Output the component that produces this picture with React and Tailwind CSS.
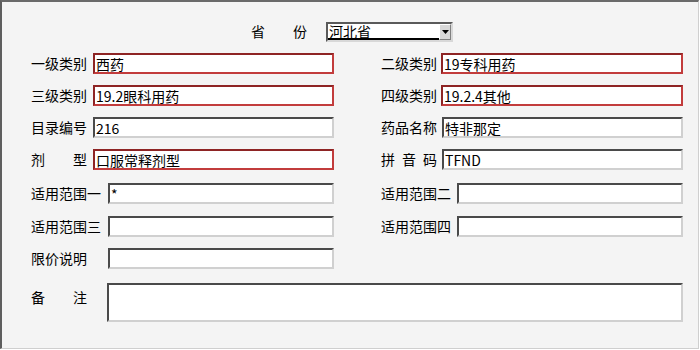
const font = { fontFamily: '"Noto Sans CJK SC", "Noto Sans", sans-serif' };

const grayBox =
  "border-2 border-t-[#4a4a4a] border-l-[#4a4a4a] border-b-[#d0d0d0] border-r-[#d0d0d0] bg-white";
const redBox =
  "border-2 border-t-[#8e2424] border-l-[#8e2424] border-b-[#c23c3c] border-r-[#c23c3c] bg-white";

function Label({ text, spaced, width }) {
  if (spaced) {
    return (
      <span className={`${width} shrink-0`}>
        <span className="flex w-[56px] justify-between">
          {text.split("").map((ch, i) => (
            <span key={i}>{ch}</span>
          ))}
        </span>
      </span>
    );
  }
  return <span className={`${width} shrink-0 whitespace-nowrap`}>{text}</span>;
}

function Field({ label, value = "", red, spaced, width }) {
  return (
    <div className="flex flex-1 items-center">
      <Label text={label} spaced={spaced} width={width} />
      <div
        className={`flex h-[21px] min-w-0 flex-1 items-center pl-[1px] leading-none ${
          red ? redBox : grayBox
        }`}
      >
        <span className="whitespace-nowrap">{value}</span>
      </div>
    </div>
  );
}

function Row({ left, right, className = "" }) {
  return (
    <div className={`flex ${className}`}>
      <div className="flex w-[303px]">{left}</div>
      <div className="ml-[47px] flex w-[302px]">{right}</div>
    </div>
  );
}

export default function App() {
  return (
    <div className="h-[350px] w-[700px] bg-white" style={font}>
      <div className="h-[349px] w-[699px] border-l-2 border-t-2 border-r border-b border-l-[#5e5e5e] border-t-[#6a6a6a] border-r-[#cfcfcf] border-b-[#cfcfcf] bg-[#f4f4f4] pl-[29px] text-[14px] text-black">
        {/* 省份 */}
        <div className="ml-[220px] mt-[19px] flex items-center">
          <span className="flex w-[56px] justify-between">
            <span>省</span>
            <span>份</span>
          </span>
          <div className="ml-[19px] flex h-[20px] w-[127px] items-stretch border-2 border-t-[#5a5a5a] border-l-[#5a5a5a] border-b-[#d8d8d8] border-r-[#d8d8d8] bg-white">
            <div className="flex flex-1 items-center border-b-2 border-black pl-[1px] leading-none">
              河北省
            </div>
            <div className="flex w-[12px] items-center justify-center border border-t-white border-l-white border-b-[#808080] border-r-[#808080] bg-[#d8d8d8]">
              <svg width="7" height="4" viewBox="0 0 7 4">
                <path d="M0 0h7L3.5 4z" fill="#000" />
              </svg>
            </div>
          </div>
        </div>

        <Row
          className="mt-[11px]"
          left={<Field label="一级类别" value="西药" red width="w-[62px]" />}
          right={<Field label="二级类别" value="19专科用药" red width="w-[60px]" />}
        />
        <Row
          className="mt-[11px]"
          left={<Field label="三级类别" value="19.2眼科用药" red width="w-[62px]" />}
          right={<Field label="四级类别" value="19.2.4其他" red width="w-[60px]" />}
        />
        <Row
          className="mt-[11px]"
          left={<Field label="目录编号" value="216" width="w-[62px]" />}
          right={<Field label="药品名称" value="特非那定" width="w-[61px]" />}
        />
        <Row
          className="mt-[11px]"
          left={<Field label="剂型" value="口服常释剂型" red spaced width="w-[62px]" />}
          right={<Field label="拼音码" value="TFND" spaced width="w-[61px]" />}
        />
        <Row
          className="mt-[13px]"
          left={<Field label="适用范围一" value="*" width="w-[77px]" />}
          right={<Field label="适用范围二" width="w-[76px]" />}
        />
        <Row
          className="mt-[12px]"
          left={<Field label="适用范围三" width="w-[77px]" />}
          right={<Field label="适用范围四" width="w-[76px]" />}
        />
        <Row
          className="mt-[11px]"
          left={<Field label="限价说明" width="w-[77px]" />}
          right={<div />}
        />
        <div className="mt-[14px] flex">
          <span className="mt-[4px] flex w-[56px] shrink-0 justify-between">
            <span>备</span>
            <span>注</span>
          </span>
          <div className={`ml-[20px] h-[39px] w-[576px] ${grayBox}`} />
        </div>
      </div>
    </div>
  );
}
